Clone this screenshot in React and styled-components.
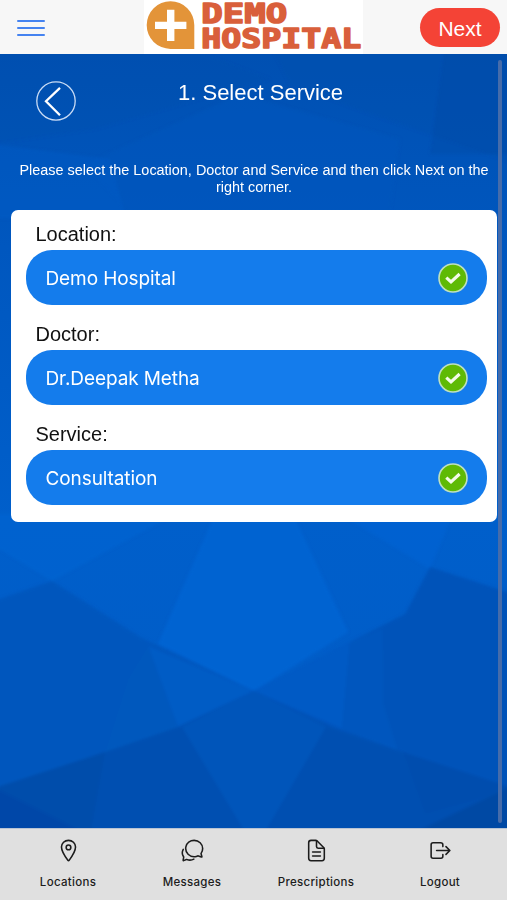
import React from 'react';
import styled, { createGlobalStyle } from 'styled-components';
import {
  IoLocationOutline,
  IoChatbubblesOutline,
  IoDocumentTextOutline,
  IoLogOutOutline,
} from 'react-icons/io5';

const fields = [
  { label: 'Location:', value: 'Demo Hospital' },
  { label: 'Doctor:', value: 'Dr.Deepak Metha' },
  { label: 'Service:', value: 'Consultation' },
];

const tabs = [
  { label: 'Locations', Icon: IoLocationOutline },
  { label: 'Messages', Icon: IoChatbubblesOutline },
  { label: 'Prescriptions', Icon: IoDocumentTextOutline },
  { label: 'Logout', Icon: IoLogOutOutline },
];

function Logo() {
  return (
    <LogoBox>
      <svg width="219" height="54" viewBox="0 0 219 54">
        <path d="M26.5 1.3A23.8 23.8 0 1 0 26.5 48.9H50.3V25.1A23.8 23.8 0 0 0 26.5 1.3Z" fill="#e39439" />
        <path d="M23 9.7h7.4v12h12v7.2h-12v12h-7.4v-12h-12v-7.2h12z" fill="#fff" />
        <LogoText x="57.3" y="23.2" textLength="86" lengthAdjust="spacingAndGlyphs">DEMO</LogoText>
        <LogoText x="57.3" y="48.4" textLength="160" lengthAdjust="spacingAndGlyphs">HOSPITAL</LogoText>
      </svg>
    </LogoBox>
  );
}

function Facets() {
  return (
    <Backdrop viewBox="0 0 507 774" preserveAspectRatio="none">
      <defs>
        <linearGradient id="base" x1="0" y1="0" x2="0" y2="1">
          <stop offset="0" stopColor="#0050b2" />
          <stop offset="0.25" stopColor="#0057bf" />
          <stop offset="0.6" stopColor="#005fcb" />
          <stop offset="1" stopColor="#005bc5" />
        </linearGradient>
        <filter id="soften" x="0" y="0" width="1" height="1">
          <feGaussianBlur stdDeviation="1.5" />
        </filter>
      </defs>
      <rect width="507" height="774" fill="url(#base)" />
      <g filter="url(#soften)">
        {/* upper part */}
        <path d="M-9 -9H180L270 25L95 75L-9 90Z" fill="#004dab" opacity="0.3" />
        <path d="M270 -9H516V110L370 60L290 30Z" fill="#004dab" opacity="0.35" />
        <path d="M445 -9H516V100H430Z" fill="#0047a3" opacity="0.35" />
        <path d="M85 110L240 40L400 85L390 160H130Z" fill="#0055bd" opacity="0.5" />
        <path d="M-9 90L110 105L125 160L-9 165Z" fill="#005cc9" opacity="0.4" />
        {/* lower part */}
        <path d="M-9 460H175L52 527L-9 490Z" fill="#0064d0" opacity="0.75" />
        <path d="M340 460H453L430 515Z" fill="#0063d3" opacity="0.7" />
        <path d="M215 460H293L348 578L254 637L158 590Z" fill="#0063d1" />
        <path d="M-9 548L52 527L140 583L254 637L178 673L-9 737Z" fill="#0056bd" />
        <path d="M148 592L254 637L178 673Z" fill="#005bc5" />
        <path d="M148 592L178 673L105 698L128 625Z" fill="#0058bd" />
        <path d="M254 637L405 560L430 513L516 541V737L330 673Z" fill="#0053b9" />
        <path d="M254 637L350 588L342 675Z" fill="#005ac5" />
        <path d="M350 588L382 575L383 650L397 696L342 675Z" fill="#0057be" />
        <path d="M-9 737L178 673L254 637L330 673L516 737V783H-9Z" fill="#0050b1" />
        <path d="M182 673L254 637L326 673L262 783H248Z" fill="#0054ba" />
        <path d="M-9 735L105 698L90 783H-9Z" fill="#004dab" />
        <path d="M-9 732L92 783H-9Z" fill="#0047a8" />
        <path d="M403 698L516 735L425 760Z" fill="#004eae" />
        <path d="M516 730V783H405Z" fill="#0049a4" />
      </g>
    </Backdrop>
  );
}

function CheckBadge() {
  return (
    <svg width="30" height="30" viewBox="0 0 30 30">
      <circle cx="15" cy="15" r="14" fill="#5fba05" stroke="#bfe0c0" strokeWidth="1.6" />
      <path d="M8.3 14.6L13 19L21.6 11" fill="none" stroke="#f4fbe9" strokeWidth="3.1" />
    </svg>
  );
}

export default function App() {
  return (
    <Page>
      <GlobalStyle />
      <Header>
        <MenuButton aria-label="Menu">
          <span />
          <span />
          <span />
        </MenuButton>
        <Logo />
        <NextButton>Next</NextButton>
      </Header>

      <Content>
        <Facets />
        <TitleRow>
          <BackButton aria-label="Back">
            <svg width="40" height="40" viewBox="0 0 40 40" fill="none" stroke="#fff">
              <circle cx="20" cy="20" r="19.2" strokeWidth="1.3" stroke="#c9dcf5" />
              <path d="M24 6.8L10 20.2L24 34.2" strokeWidth="2.3" />
            </svg>
          </BackButton>
          <Title>1. Select Service</Title>
        </TitleRow>
        <Hint>
          Please select the Location, Doctor and Service and then click Next on the right corner.
        </Hint>
        <Card>
          {fields.map(({ label, value }) => (
            <Field key={label}>
              <Label>{label}</Label>
              <Pill>
                {value}
                <CheckBadge />
              </Pill>
            </Field>
          ))}
        </Card>
        <ScrollThumb />
      </Content>

      <TabBar>
        {tabs.map(({ label, Icon }) => (
          <Tab key={label}>
            <Icon />
            {label}
          </Tab>
        ))}
      </TabBar>
    </Page>
  );
}

const GlobalStyle = createGlobalStyle`
  * {
    box-sizing: border-box;
  }
  body {
    margin: 0;
    font-family: "Liberation Sans", Arial, sans-serif;
  }
  button {
    border: 0;
    padding: 0;
    font: inherit;
    background: none;
  }
`;

const Page = styled.div`
  display: flex;
  flex-direction: column;
  height: 900px;
  overflow: hidden;
`;

const Header = styled.header`
  display: grid;
  grid-template-columns: 144px 219px 1fr;
  align-items: center;
  height: 54px;
  background: #f7f7f7;
`;

const MenuButton = styled.button`
  display: flex;
  flex-direction: column;
  gap: 5px;
  width: 28px;
  margin: 1px 0 0 17px;

  span {
    height: 2px;
    border-radius: 1px;
    background: #4583f0;
  }
`;

const LogoBox = styled.div`
  height: 54px;
  background: #fff;

  svg {
    display: block;
    overflow: visible;
  }
`;

const LogoText = styled.text`
  font: bold 27px "DejaVu Sans Mono", monospace;
  fill: #d95f3b;
  stroke: #d95f3b;
  stroke-width: 1.5;
  stroke-linejoin: round;
`;

const NextButton = styled.button`
  justify-self: end;
  width: 80px;
  height: 39px;
  margin: 1px 7px 0 0;
  padding-top: 2px;
  border-radius: 20px;
  background: #f44336;
  color: #fff;
  font-size: 21px;
`;

const Content = styled.main`
  position: relative;
  isolation: isolate;
  height: 774px;
  color: #fff;
`;

const Backdrop = styled.svg`
  position: absolute;
  inset: 0;
  width: 100%;
  height: 100%;
  z-index: -1;
`;

const TitleRow = styled.div`
  display: flex;
  align-items: flex-start;
  height: 108px;
  padding: 27px 0 0 36px;
`;

const BackButton = styled.button`
  width: 40px;
  height: 40px;
  color: #fff;
`;

const Title = styled.h1`
  margin: -1px 0 0 102px;
  font-size: 22px;
  font-weight: 400;
  line-height: 26px;
`;

const Hint = styled.p`
  height: 48px;
  margin: 0;
  padding: 0 15px 0 16px;
  font-size: 14.43px;
  line-height: 17px;
  text-align: center;
`;

const Card = styled.section`
  width: 486px;
  height: 312px;
  margin-left: 11px;
  padding: 8px 10px 0 15px;
  border-radius: 7px;
  background: #fff;
`;

const Field = styled.div`
  height: 100px;
`;

const Label = styled.div`
  height: 32px;
  padding-left: 9.5px;
  color: #111;
  font-size: 20px;
  line-height: 32px;
`;

const Pill = styled.div`
  display: flex;
  align-items: center;
  justify-content: space-between;
  height: 55px;
  padding: 1px 19px 0 19.5px;
  border-radius: 26px;
  background: #147cec;
  font-family: Inter, sans-serif;
  font-size: 19px;
  letter-spacing: -0.1px;
`;

const ScrollThumb = styled.div`
  position: absolute;
  top: 6px;
  right: 5px;
  width: 4px;
  height: 763px;
  border-radius: 2px;
  background: #466caa;
`;

const TabBar = styled.nav`
  display: grid;
  grid-template-columns: repeat(4, 124px);
  height: 72px;
  padding: 9px 0 0 6px;
  border-top: 1px solid #b8c4d4;
  background: #e0e0e0;
`;

const Tab = styled.a`
  display: flex;
  flex-direction: column;
  align-items: center;
  color: #1c1c1c;
  font: 500 11.5px/14px Inter, sans-serif;
  letter-spacing: 0.3px;

  svg {
    width: 25px;
    height: 25px;
    margin-bottom: 12px;
  }
`;
